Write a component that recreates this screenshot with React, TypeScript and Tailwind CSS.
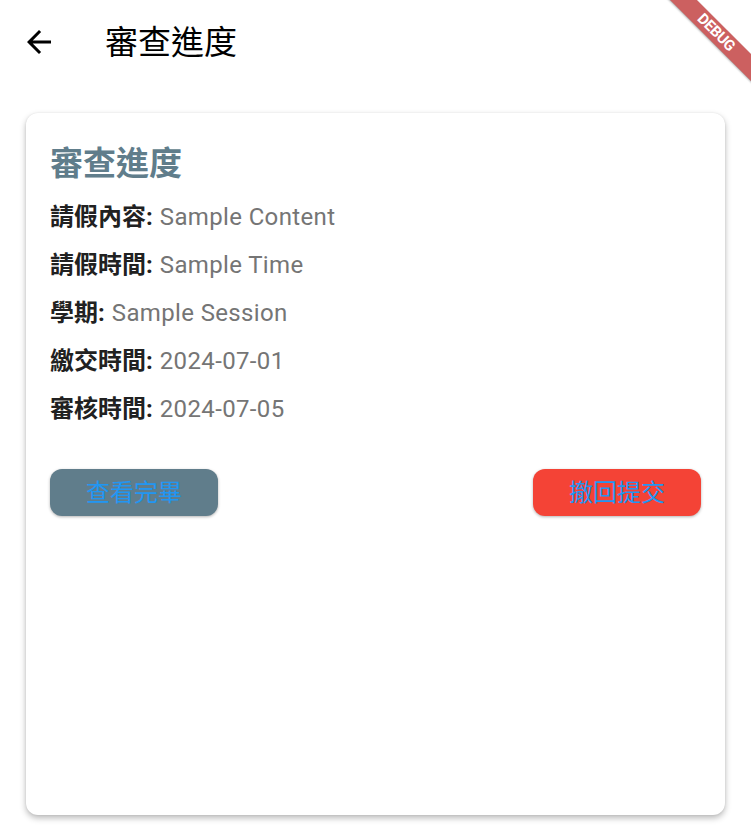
const rows = [
  { label: "請假內容", value: "Sample Content" },
  { label: "請假時間", value: "Sample Time" },
  { label: "學期", value: "Sample Session" },
  { label: "繳交時間", value: "2024-07-01" },
  { label: "審核時間", value: "2024-07-05" },
];

const cjk = "font-['Roboto','Noto_Sans_CJK_TC',sans-serif]";

function DebugBanner() {
  return (
    <div className="pointer-events-none absolute right-0 top-0 h-[110px] w-[110px] overflow-hidden">
      <div className="absolute left-[-5px] top-[23px] flex h-[19px] w-[160px] rotate-45 items-center justify-center bg-[#b71c1c]/70 shadow-[0_1px_2px_rgba(0,0,0,0.3)]">
        <span className="font-['Roboto',sans-serif] text-[15px] font-bold leading-none tracking-tight text-white">
          DEBUG
        </span>
      </div>
    </div>
  );
}

export default function App() {
  return (
    <div className={`relative h-[840px] w-[751px] overflow-hidden bg-white ${cjk}`}>
      <DebugBanner />

      <header className="flex h-[84px] items-center">
        <button className="ml-[21px] flex h-[36px] w-[36px] items-center justify-center">
          <svg viewBox="0 0 24 24" className="h-[36px] w-[36px]" fill="#000">
            <path d="M20 11H7.83l5.59-5.59L12 4l-8 8 8 8 1.41-1.41L7.83 13H20v-2z" />
          </svg>
        </button>
        <h1 className="ml-[48px] text-[33px] leading-none text-black">審查進度</h1>
      </header>

      <div className="mx-[26px] mt-[29px] h-[702px] rounded-[12px] bg-white p-[24px] shadow-[0_3px_6px_rgba(0,0,0,0.28),0_0_2px_rgba(0,0,0,0.08)]">
        <h2 className="flex h-[53px] items-center text-[33px] font-bold leading-none text-[#607d8b]">
          審查進度
        </h2>
        <div className="mt-[3px]">
          {rows.map((row) => (
            <div key={row.label} className="flex h-[48px] items-center text-[24px] leading-none">
              <span className="font-bold text-[#212121]">{row.label}:</span>
              <span className="ml-[7px] tracking-[0.36px] text-[#757575]">{row.value}</span>
            </div>
          ))}
        </div>
        <div className="mt-[36px] flex justify-between">
          <button className="flex h-[47px] w-[168px] items-center justify-center rounded-[12px] bg-[#607d8b] text-[24px] leading-none text-[#2196f3] shadow-[0_1px_3px_rgba(0,0,0,0.3)]">
            查看完畢
          </button>
          <button className="flex h-[47px] w-[168px] items-center justify-center rounded-[12px] bg-[#f44336] text-[24px] leading-none text-[#2196f3] shadow-[0_1px_3px_rgba(0,0,0,0.3)]">
            撤回提交
          </button>
        </div>
      </div>
    </div>
  );
}
